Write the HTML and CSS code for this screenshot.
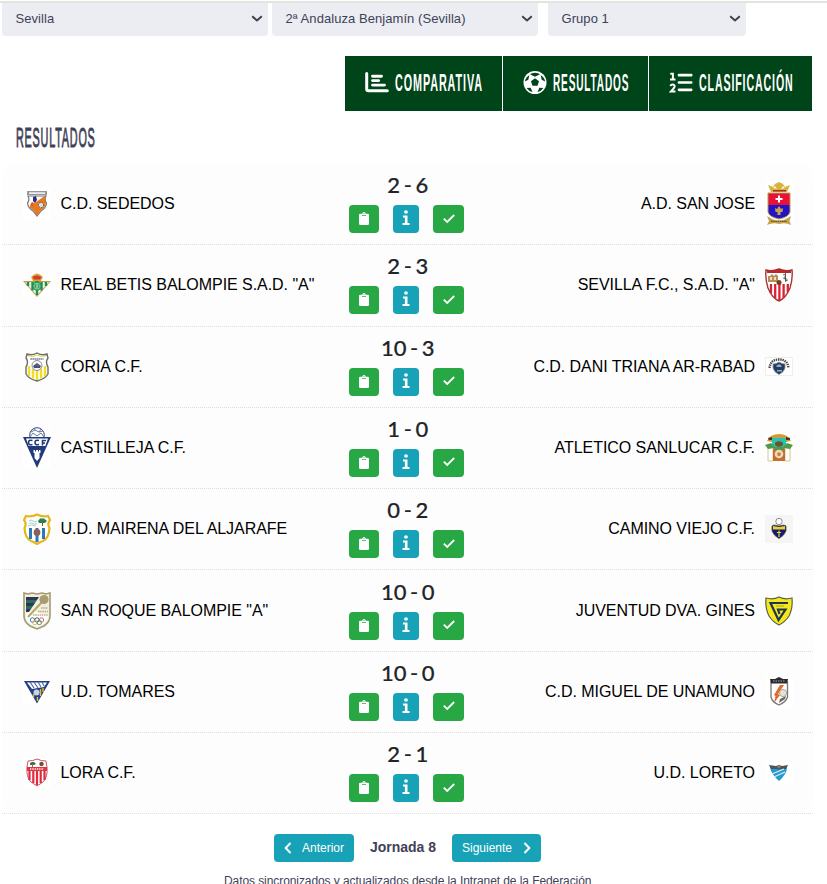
FILE: index.html
```html
<!DOCTYPE html>
<html lang="es">
<head>
  <meta charset="UTF-8" />
  <meta name="viewport" content="width=device-width, initial-scale=1.0" />
  <title>Resultados</title>
  <link rel="stylesheet" href="styles.css">
</head>
<body>

  <svg class="defs">
    <symbol id="clip" viewBox="0 0 10 13"><path fill="currentColor" fill-rule="evenodd" d="M1.200 1.800H3.200Q3.500 0 5 0T6.800 1.800H8.800Q10 1.800 10 3V11.800Q10 13 8.800 13H1.200Q0 13 0 11.800V3Q0 1.800 1.200 1.800zM3 3.300V4.100H7V3.300zM5 1.100A.5.500 0 0 0 5 2.100.5.500 0 0 0 5 1.100z"/></symbol>
    <symbol id="info" viewBox="0 0 8 16"><path fill="currentColor" d="M4 .3A1.900 1.700 0 0 1 4 3.700 1.900 1.700 0 0 1 4 .3zM1 5.500H5.500V13H7.500V15H.5V13H2.900V7.400H1z"/></symbol>
    <symbol id="check" viewBox="0 0 12 10"><path fill="none" stroke="currentColor" stroke-width="1.800" d="M.8 4.700 4.200 8 11.200 1"/></symbol>
    <symbol id="down" viewBox="0 0 12 8"><path fill="none" stroke="currentColor" stroke-width="2" d="M1.200 1.200 6 5.500 10.800 1.200"/></symbol>
  </svg>

  <div class="filters">
    <div class="select wide">Sevilla<svg><use href="#down"/></svg></div>
    <div class="select wide">2ª Andaluza Benjamín (Sevilla)<svg><use href="#down"/></svg></div>
    <div class="select group">Grupo 1<svg><use href="#down"/></svg></div>
  </div>

  <div class="tabs">
    <a class="tab comparativa">
      <svg width="24" height="22" viewBox="0 0 24 22"><path fill="none" stroke="#fff" stroke-width="3" stroke-linecap="round" stroke-linejoin="round" d="M1.700 1.500V17Q1.700 18.800 3.500 18.800H22.300"/><path fill="none" stroke="#fff" stroke-width="2.900" stroke-linecap="round" d="M7.500 4.200H16.500M7.500 8.600H13.700M7.500 13.100H19.500"/></svg>
      <span class="tall"><b>COMPARATIVA</b></span>
    </a>
    <a class="tab resultados">
      <svg width="24" height="24" viewBox="0 0 24 24"><circle cx="12" cy="11.500" r="11.500" fill="#fff"/><path fill="#004419" d="M12 7.200 16 10.200 14.500 14.800H9.500L8 10.200zM7 3.200 12 5.800 17 3.200 15 2.200 12 1.700 9 2.200zM1.900 10.500 5.300 8.800 6.400 4 3.800 6.200 2.400 8.600zM22.100 10.500 18.700 8.800 17.600 4 20.200 6.200 21.600 8.600zM3.600 17 7.600 16.800 9.500 20.900 6.500 19.900zM20.400 17 16.400 16.800 14.500 20.900 17.500 19.900z"/></svg>
      <span class="tall"><b>RESULTADOS</b></span>
    </a>
    <a class="tab clasificacion">
      <svg width="24" height="22" viewBox="0 0 24 22"><path fill="none" stroke="#fff" stroke-width="2.700" stroke-linecap="round" d="M10 3.200H22.200M10 10.500H22.200M10 17.800H22.200"/><path fill="none" stroke="#fff" stroke-width="2" d="M1.300 1.700H3.900V7.500M1 7.500H6.500M1.200 13.800Q2.200 12.500 3.900 12.600 6 13 5.500 14.800 5 16.200 1.800 19.600H6.500"/></svg>
      <span class="tall"><b>CLASIFICACIÓN</b></span>
    </a>
  </div>

  <h2 class="title"><span>RESULTADOS</span></h2>

  <div class="matches">
    <div class="match">
      <svg class="crest" width="28" height="32" viewBox="0 0 28 32"><rect width="28" height="32" fill="#fff"/><path fill="#fff" stroke="#777" stroke-width="1.200" d="M5 8Q7 12 4.500 15 5 20 10 23L14 28 18 23Q23 20 23.500 15 21 12 23 8z"/><path fill="#e6791d" d="M23 7Q21 12 23 15 22 20 17 23L14 28 11 23 6 19z"/><path fill="#98989c" d="M4 3H24V7H4z"/><path fill="#e8e8ee" d="M6 4.200H22V6H6z"/><path fill="#33267d" d="M10 9 13 8 14 12 12 15 10 13z"/><path fill="#d95c28" d="M9 14 11 15 9 19 7 17z"/><circle cx="18" cy="17" r="2.600" fill="#ddd" stroke="#555" stroke-dasharray="1.500 1"/></svg>
      <div class="team">C.D. SEDEDOS</div>
      <div class="center">
        <div class="score">2 - 6</div>
        <div class="actions"><a class="btn acta"><svg><use href="#clip"/></svg></a><a class="btn info"><svg><use href="#info"/></svg></a><a class="btn ok"><svg><use href="#check"/></svg></a></div>
      </div>
      <div class="team away">A.D. SAN JOSE</div>
      <svg class="crest" width="28" height="46" viewBox="0 0 28 46"><rect width="28" height="46" fill="#fff"/><path fill="#d5b43e" d="M3 4 8 6 10 3 14 1 18 3 20 6 25 4 22 11H6z"/><path fill="#fff8d8" d="M8 7 10 5 12 8zM16 8 18 5 20 7z"/><path fill="#b02829" d="M8 9H21V10.500H8z"/><path fill="#e81237" d="M3 12H25V25H3z"/><path fill="#2412c8" d="M3 24H25V31Q24 36 14 38 4 36 3 31z"/><path fill="none" stroke="#b5a04b" d="M3 12H25V31Q24 36 14 38 4 36 3 31z"/><path stroke="#fff" stroke-width="2" d="M14 14.500V21.500M10.500 18H17.500"/><path fill="#c6a34a" d="M14 25 16 28 18 27 17.500 31H15.500V34H12.500V31H10.500L10 27 12 28zM2 35 7 38Q14 41 21 38L26 35 24.500 40 26 44Q20 41 14 43 8 41 2 44L4 40z"/><path stroke="#69512b" stroke-width="1.200" stroke-dasharray="1.500 .7" d="M6 40.300H22"/></svg>
    </div>
    <div class="match">
      <svg class="crest" width="28" height="24" viewBox="0 0 28 24"><rect width="28" height="24" fill="#fff"/><path fill="#c89a43" d="M0 8H28L14 24z"/><path fill="#f5f3df" d="M2 9H26L14 22.500z"/><path stroke="#169251" stroke-width="2.400" d="M5 9V13M9.500 9V17.500M14 8V22M18.500 9V17.500M23 9V13"/><path fill="#d7a936" d="M8 4Q14-3 20 4L18 8H10z"/><path fill="#d73a31" d="M9.500 4Q14 1 18.500 4L17 6.500H11z"/><circle cx="14" cy="13" r="4" fill="#f5f3df" stroke="#169251" stroke-width="1.300"/><path fill="none" stroke="#169251" stroke-width="1.200" d="M12 10.500V15.500M12 11H16V13H12M16 13V15H12"/></svg>
      <div class="team">REAL BETIS BALOMPIE S.A.D. "A"</div>
      <div class="center">
        <div class="score">2 - 3</div>
        <div class="actions"><a class="btn acta"><svg><use href="#clip"/></svg></a><a class="btn info"><svg><use href="#info"/></svg></a><a class="btn ok"><svg><use href="#check"/></svg></a></div>
      </div>
      <div class="team away">SEVILLA F.C., S.A.D. "A"</div>
      <svg class="crest" width="28" height="34" viewBox="0 0 28 34"><path fill="#fff" stroke="#a5352f" stroke-width="1.400" d="M1 2Q7 4 14 1 21 4 27 2 28 10 25 20 21 30 14 33 7 30 3 20 0 10 1 2z"/><path stroke="#d92335" stroke-width="2.300" d="M6 16V25M10.200 16V30M14.400 16V32M18.600 16V30M22.800 16V24"/><path fill="#b9262e" d="M2 2Q7 4 14 1 21 4 26 2V5H2z"/><path fill="#b78d5b" d="M3 8H5L7 6 9 8 11 6 13 8V14H3z"/><path fill="#eee1bd" d="M5 9h2v3H5zM9 9h2v3H9z"/><path fill="none" stroke="#444" stroke-width=".8" d="M18 7Q21 5 20 9 19 12 22 13 23 10 18 10M20.500 5V14"/><circle cx="14" cy="14.500" r="2.500" fill="#754021"/></svg>
    </div>
    <div class="match">
      <svg class="crest" width="28" height="30" viewBox="0 0 28 30"><path fill="#fff" stroke="#6b6d68" stroke-width="1.400" d="M4 2Q9 4 14 1 19 4 24 2L25 6Q22 10 25 15V22Q22 27 14 29 6 27 3 22V15Q6 10 3 6z"/><path stroke="#f0dd24" stroke-width="2.400" d="M6 14V24M10 17V26.500M14 19V28M18 17V26.500M22 14V24"/><path fill="none" stroke="#e7d94c" d="M5.500 4Q10 5.500 14 3 18 5.500 22.500 4"/><circle cx="14" cy="13.500" r="5" fill="#f7f7f7" stroke="#8b8c9b"/><path fill="#434f82" d="M10 14 14 11 18 14 17 16H11z"/><path stroke="#57657b" stroke-width="1.700" stroke-dasharray="1.300 .7" d="M7.500 7H20.500"/><path stroke="#a65454" d="M13 13.500H16"/></svg>
      <div class="team">CORIA C.F.</div>
      <div class="center">
        <div class="score">10 - 3</div>
        <div class="actions"><a class="btn acta"><svg><use href="#clip"/></svg></a><a class="btn info"><svg><use href="#info"/></svg></a><a class="btn ok"><svg><use href="#check"/></svg></a></div>
      </div>
      <div class="team away">C.D. DANI TRIANA AR-RABAD</div>
      <svg class="crest" width="28" height="19" viewBox="0 0 28 19"><path fill="#fff" stroke="#eee" d="M.5.500H27.500V18.500H.5z"/><path fill="none" stroke="#464646" stroke-width="2.400" stroke-dasharray="1.400 .8" d="M4.500 11Q5.500 2.500 14 2.500T23.500 11"/><path fill="#243b60" stroke="#8a97a8" stroke-width=".8" d="M8 7Q11 7 14 5 17 7 20 7V11Q19 15 14 17.500 9 15 8 11z"/><path fill="#96a9bf" d="M11 9 14 7 17 9 16 10H12zM12 13H17V14.500H12z"/></svg>
    </div>
    <div class="match">
      <svg class="crest" width="28" height="41" viewBox="0 0 28 41"><rect width="28" height="41" fill="#fff"/><circle cx="14" cy="8" r="7.300" fill="#fff" stroke="#344778"/><path fill="none" stroke="#6578a3" d="M8 5 12 3 16 5 20 4M7 10 10 6 14 9 18 6 21 10M12 3 11 1M16 5 18 2"/><path fill="#203a7c" d="M0 10H28L14 41z"/><path fill="#fff" d="M3 11.500H25L22.300 19H5.700zM10.500 23H12V24.500H13V23H15V24.500H16V23H17.500V26H16.500V31L14 34 11.500 31V26H10.500z"/><path fill="none" stroke="#203a7c" stroke-width="1.600" d="M9.500 13.500Q5.500 12.500 5.500 15.500T9.500 17.500M16 13.500Q12 12.500 12 15.500T16 17.500M19.500 18.500V13.500H23M19.500 16H22"/></svg>
      <div class="team">CASTILLEJA C.F.</div>
      <div class="center">
        <div class="score">1 - 0</div>
        <div class="actions"><a class="btn acta"><svg><use href="#clip"/></svg></a><a class="btn info"><svg><use href="#info"/></svg></a><a class="btn ok"><svg><use href="#check"/></svg></a></div>
      </div>
      <div class="team away">ATLETICO SANLUCAR C.F.</div>
      <svg class="crest" width="28" height="30" viewBox="0 0 28 30"><rect width="28" height="30" fill="#fff"/><path fill="#d39b35" d="M2 8Q5 1 14 1 23 1 26 8L21 9 19 5H9L7 9z"/><path fill="#24c5b5" d="M7 5H21V17H7z"/><path fill="#fff" stroke="#d4c78b" d="M3 15H8V28H3zM20 15H25V28H20z"/><path fill="#c56e2e" d="M8 16H20V28H8z"/><path fill="#4e9c45" d="M0 12 6 10 10 14 18 14 22 10 28 12 25 16 20 15 16 18H12L8 15 3 16z"/><ellipse cx="14" cy="11" rx="4" ry="2.700" fill="#74502b"/><circle cx="14" cy="21" r="4.300" fill="#f0d8bd"/><path fill="#d17d40" d="M14 19 16 20.500 15.200 23H12.800L12 20.500z"/><path fill="#51351f" d="M3 5 7 4 7 7 4 7zM21 4 25 5 25 7 21 7z"/></svg>
    </div>
    <div class="match">
      <svg class="crest" width="28" height="32" viewBox="0 0 28 32"><path fill="#fff" stroke="#e7b61d" stroke-width="2.200" d="M3 3Q9 4 14 1.500 19 4 25 3L27 7Q24 11 26.500 15 26 25 20 28 17 29 14 31 11 29 8 28 2 25 1.500 15 4 11 1 7z"/><path stroke="#2b78bc" stroke-width="3" d="M7.500 15V26M14 15V29M20.500 15V26"/><path fill="none" stroke="#98c9c4" stroke-width=".9" d="M6 8Q8 6 10 8T14 8M6 10.500Q8 9 10 10.500T14 10.500M5 13Q8 11 13 13"/><path fill="#21864d" d="M15 8 17 5.500H21L24 8 22 10H16z"/><path stroke="#805c36" d="M19.500 8V13"/><circle cx="14" cy="19.500" r="3.400" fill="#896154"/></svg>
      <div class="team">U.D. MAIRENA DEL ALJARAFE</div>
      <div class="center">
        <div class="score">0 - 2</div>
        <div class="actions"><a class="btn acta"><svg><use href="#clip"/></svg></a><a class="btn info"><svg><use href="#info"/></svg></a><a class="btn ok"><svg><use href="#check"/></svg></a></div>
      </div>
      <div class="team away">CAMINO VIEJO C.F.</div>
      <svg class="crest" width="28" height="28" viewBox="0 0 28 28"><rect width="28" height="28" fill="#f5f5f5"/><circle cx="14" cy="6.500" r="3.200" fill="#fff" stroke="#8b8b8b"/><path fill="#161673" stroke="#55553d" stroke-width=".8" d="M7 11 9 10 14 11 19 10 21 11V16Q19 21 14 23.500 9 21 7 16z"/><path fill="#e5d42b" d="M8 11 14 12 20 11V14.500H8z"/><path stroke="#e7d53e" stroke-width="1.200" d="M14 15.500V22M11.800 17.500H16.200"/></svg>
    </div>
    <div class="match">
      <svg class="crest" width="28" height="38" viewBox="0 0 28 38"><path fill="#f2eee2" stroke="#a39b70" stroke-width="1.600" d="M1 1 5 2 9 1 14 2 19 1 23 2 27 1V24Q27 30 21 34L14 37 7 34Q1 30 1 24z"/><path fill="#fff" d="M3 22Q9 17 14 20 19 23 25 22V25Q24 31 14 35 4 31 3 25z"/><path fill="#31335d" d="M3 5H16L14 8H3zM3 11H12L10 14H3zM3 17H8L6 20H3z"/><path fill="#287052" d="M3 8H14L12 11H3zM3 14H10L8 17H3z"/><path stroke="#b5a75f" stroke-width="2" d="M5 25 19 10"/><circle cx="21" cy="7.500" r="4.600" fill="#a89d6c"/><path stroke="#b8ae80" stroke-width="1.500" stroke-dasharray="1.500 .7" d="M18 16H25M15 19.500H25M10 23H25"/><g fill="none"><circle cx="9.500" cy="28" r="2.200" stroke="#397cb3"/><circle cx="14" cy="28" r="2.200" stroke="#555"/><circle cx="18.500" cy="28" r="2.200" stroke="#d56570"/><circle cx="11.800" cy="30.500" r="2.200" stroke="#d8b557"/><circle cx="16.300" cy="30.500" r="2.200" stroke="#529a6a"/></g></svg>
      <div class="team">SAN ROQUE BALOMPIE "A"</div>
      <div class="center">
        <div class="score">10 - 0</div>
        <div class="actions"><a class="btn acta"><svg><use href="#clip"/></svg></a><a class="btn info"><svg><use href="#info"/></svg></a><a class="btn ok"><svg><use href="#check"/></svg></a></div>
      </div>
      <div class="team away">JUVENTUD DVA. GINES</div>
      <svg class="crest" width="28" height="30" viewBox="0 0 28 30"><path fill="#f6e818" stroke="#55634e" stroke-width="1.200" d="M1 2Q8 4 14 1 20 4 27 2 28 12 24 20 20 26 14 29 8 26 4 20 0 12 1 2z"/><path fill="none" stroke="#1d3556" stroke-width="2.200" d="M23 7H5.500L13.500 24 20.500 13.500H13L14.500 18"/><path stroke="#a8a232" d="M11 10H19"/></svg>
    </div>
    <div class="match">
      <svg class="crest" width="28" height="24" viewBox="0 0 28 24"><rect width="28" height="24" fill="#fff"/><path fill="#233d87" d="M1 1H27L14 23.500z"/><path fill="#fff" d="M4 2.500H24L21 7 9 9z"/><path stroke="#4e6aa5" stroke-width="1.200" d="M7 2 11 8M11 2 15 8M15 2 18 7M19 2 21 6"/><path stroke="#dfbd36" stroke-width="1.500" d="M20 8V12M17.500 9V16M10.500 14V17M14.500 17V21"/><circle cx="13.500" cy="12.500" r="3" fill="#c8d3e3"/></svg>
      <div class="team">U.D. TOMARES</div>
      <div class="center">
        <div class="score">10 - 0</div>
        <div class="actions"><a class="btn acta"><svg><use href="#clip"/></svg></a><a class="btn info"><svg><use href="#info"/></svg></a><a class="btn ok"><svg><use href="#check"/></svg></a></div>
      </div>
      <div class="team away">C.D. MIGUEL DE UNAMUNO</div>
      <svg class="crest" width="28" height="30" viewBox="0 0 28 30"><rect width="28" height="30" fill="#fff"/><path fill="#fff" stroke="#777" stroke-width="1.300" d="M6 5V20Q7 25 14 28 21 25 22.500 20V5z"/><path fill="#292a2c" d="M5 2 10 2 14 0 18 2 23 2 22 6.500H6z"/><path stroke="#aaa" stroke-dasharray="1.500 1" d="M8 4H20"/><path fill="#e66928" d="M15 8 19 8 13 17 15 18 9 26 10.500 19 9 18z"/><circle cx="18" cy="16" r="3.600" fill="#e6e2d8" stroke="#a9a99c"/><path fill="#686965" d="M15 22 21 19 20 22 14 26z"/></svg>
    </div>
    <div class="match">
      <svg class="crest" width="28" height="30" viewBox="0 0 28 30"><rect width="28" height="30" fill="#fff"/><path fill="#fff" stroke="#c65763" d="M5 3Q10 3 14 1 18 3 23 3L24 9Q25 19 20 24L14 28 8 24Q3 19 4 9z"/><path stroke="#e22a3c" stroke-width="2.200" d="M6.500 12V22M10.300 12V25M14 12V27M17.700 12V25M21.500 12V22"/><path fill="#dc3543" d="M4 9H24V13H4z"/><path stroke="#fff" stroke-width="1.300" stroke-dasharray="1.300 1" d="M7 11H21"/><path fill="#2f7250" d="M7 5 9 4H11L13 6 11 7H7z"/><path stroke="#9b6d3e" d="M9.500 6V9"/><circle cx="18.500" cy="6" r="2.200" fill="#735032"/></svg>
      <div class="team">LORA C.F.</div>
      <div class="center">
        <div class="score">2 - 1</div>
        <div class="actions"><a class="btn acta"><svg><use href="#clip"/></svg></a><a class="btn info"><svg><use href="#info"/></svg></a><a class="btn ok"><svg><use href="#check"/></svg></a></div>
      </div>
      <div class="team away">U.D. LORETO</div>
      <svg class="crest" width="28" height="22" viewBox="0 0 28 22"><rect width="28" height="22" fill="#fff"/><path fill="#259bd0" d="M5 5H22Q22 12 14 19 6 12 5 5z"/><path fill="#4e5363" d="M4 3 11 4 14 3 17 4 23 3 21 7H15L14 8 12 7H6z"/><circle cx="14" cy="4.500" r="1.700" fill="#9b7659"/><path stroke="#d8f0f8" stroke-width="1.300" d="M7 12 19 7M9 15 20 10"/></svg>
    </div>
  </div>

  <div class="pager">
    <a class="page prev"><svg width="8" height="12" viewBox="0 0 8 12"><path fill="none" stroke="#fff" stroke-width="2" d="M6.500 1 1.700 6 6.500 11"/></svg>Anterior</a>
    <strong>Jornada 8</strong>
    <a class="page next">Siguiente<svg width="8" height="12" viewBox="0 0 8 12"><path fill="none" stroke="#fff" stroke-width="2" d="M1.500 1 6.300 6 1.500 11"/></svg></a>
  </div>
  <p class="note">Datos sincronizados y actualizados desde la Intranet de la Federación</p>

</body>
</html>
```
FILE: styles.css
```css
* { box-sizing: border-box; }
body { margin: 0; height: 884px; overflow: hidden; background: #fff; color: #3f4257; font-family: "Liberation Sans", Arial, sans-serif; }
svg { display: block; flex: none; }
.defs { width: 0; height: 0; }

.filters { display: flex; margin-top: 1px; height: 35px; border-top: 2px solid #e1e5df; padding-left: 2px; }
.select { display: flex; align-items: center; justify-content: space-between; background: #ebedf2; border-radius: 0 0 4px 4px; padding: 0 5px 2px 13.5px; font-size: 13px; letter-spacing: 0.06px; }
.select svg { width: 12px; height: 8px; }
.wide { width: 266px; margin-right: 4px; }
.wide + .wide { margin-right: 10px; }
.group { width: 198px; }

.tabs { display: flex; justify-content: flex-end; gap: 1px; margin: 20px 15px 0 0; height: 55px; }
.tab { display: flex; align-items: center; gap: 6px; background: #004419; color: #fff; padding: 0 0 1px 20px; }
.comparativa { width: 157px; }
.resultados { width: 145px; }
.clasificacion { width: 163px; }
.tall { flex: 1; width: 0; font-size: 24px; line-height: 28px; white-space: nowrap; }
.tall b { display: inline-block; transform-origin: 0 50%; letter-spacing: 2px; }
.comparativa b { transform: scaleX(0.45); }
.resultados b { transform: scaleX(0.42); }
.clasificacion b { width: 120px; transform: scaleX(0.442); }

.title { margin: 11px 0 0 16px; height: 42px; width: 90px; font-size: 28px; line-height: 32px; font-weight: 400; -webkit-text-stroke: 1px #3f4257; }
.title span { display: inline-block; transform: scaleX(0.387); transform-origin: 0 50%; letter-spacing: 2px; }

.matches { margin: -0.05px 14px 0 2px; background: #fdfdfd; border-radius: 16px; }
.match { display: flex; align-items: center; height: 81.3px; padding: 0 20px 0 21px; border-bottom: 1px dotted #dedede; color: #000; }
.team { flex: 1; width: 0; padding-left: 9.5px; font-size: 16px; letter-spacing: -0.05px; white-space: nowrap; }
.away { padding: 0 10px 0 0; text-align: right; }
.center { width: 115px; margin: 0 1px 4px -1px; text-align: center; }
.score { height: 28px; padding-left: 2px; font: 500 22px/27px Lato, sans-serif; word-spacing: -2px; color: #212529; -webkit-text-stroke: 0.2px #212529; }
.actions { display: flex; justify-content: space-between; margin-top: 6px; }
.btn { display: flex; align-items: center; justify-content: center; height: 28px; border-radius: 4px; color: #fff; }
.acta { width: 30px; background: #28a745; }
.info { width: 26px; background: #17a2b8; }
.ok { width: 31px; background: #28a745; }
.acta svg { width: 10px; height: 13px; margin-bottom: 1px; }
.info svg { width: 8px; height: 16px; margin-bottom: 2px; }
.ok svg { width: 12px; height: 10px; margin-bottom: 1px; }

.pager { display: flex; align-items: center; margin: 20px 0 0 274px; }
.pager strong { width: 98px; text-align: center; font-size: 14px; padding-bottom: 2px; }
.page { display: flex; align-items: center; justify-content: space-between; height: 28px; border-radius: 4px; background: #17a2b8; color: #fff; font-size: 12px; padding: 0 10px; }
.prev { width: 80px; }
.next { width: 89px; }
.note { margin: 11px 0 0; padding-left: 224px; font-size: 12px; line-height: 16px; letter-spacing: -0.08px; white-space: nowrap; }
```
